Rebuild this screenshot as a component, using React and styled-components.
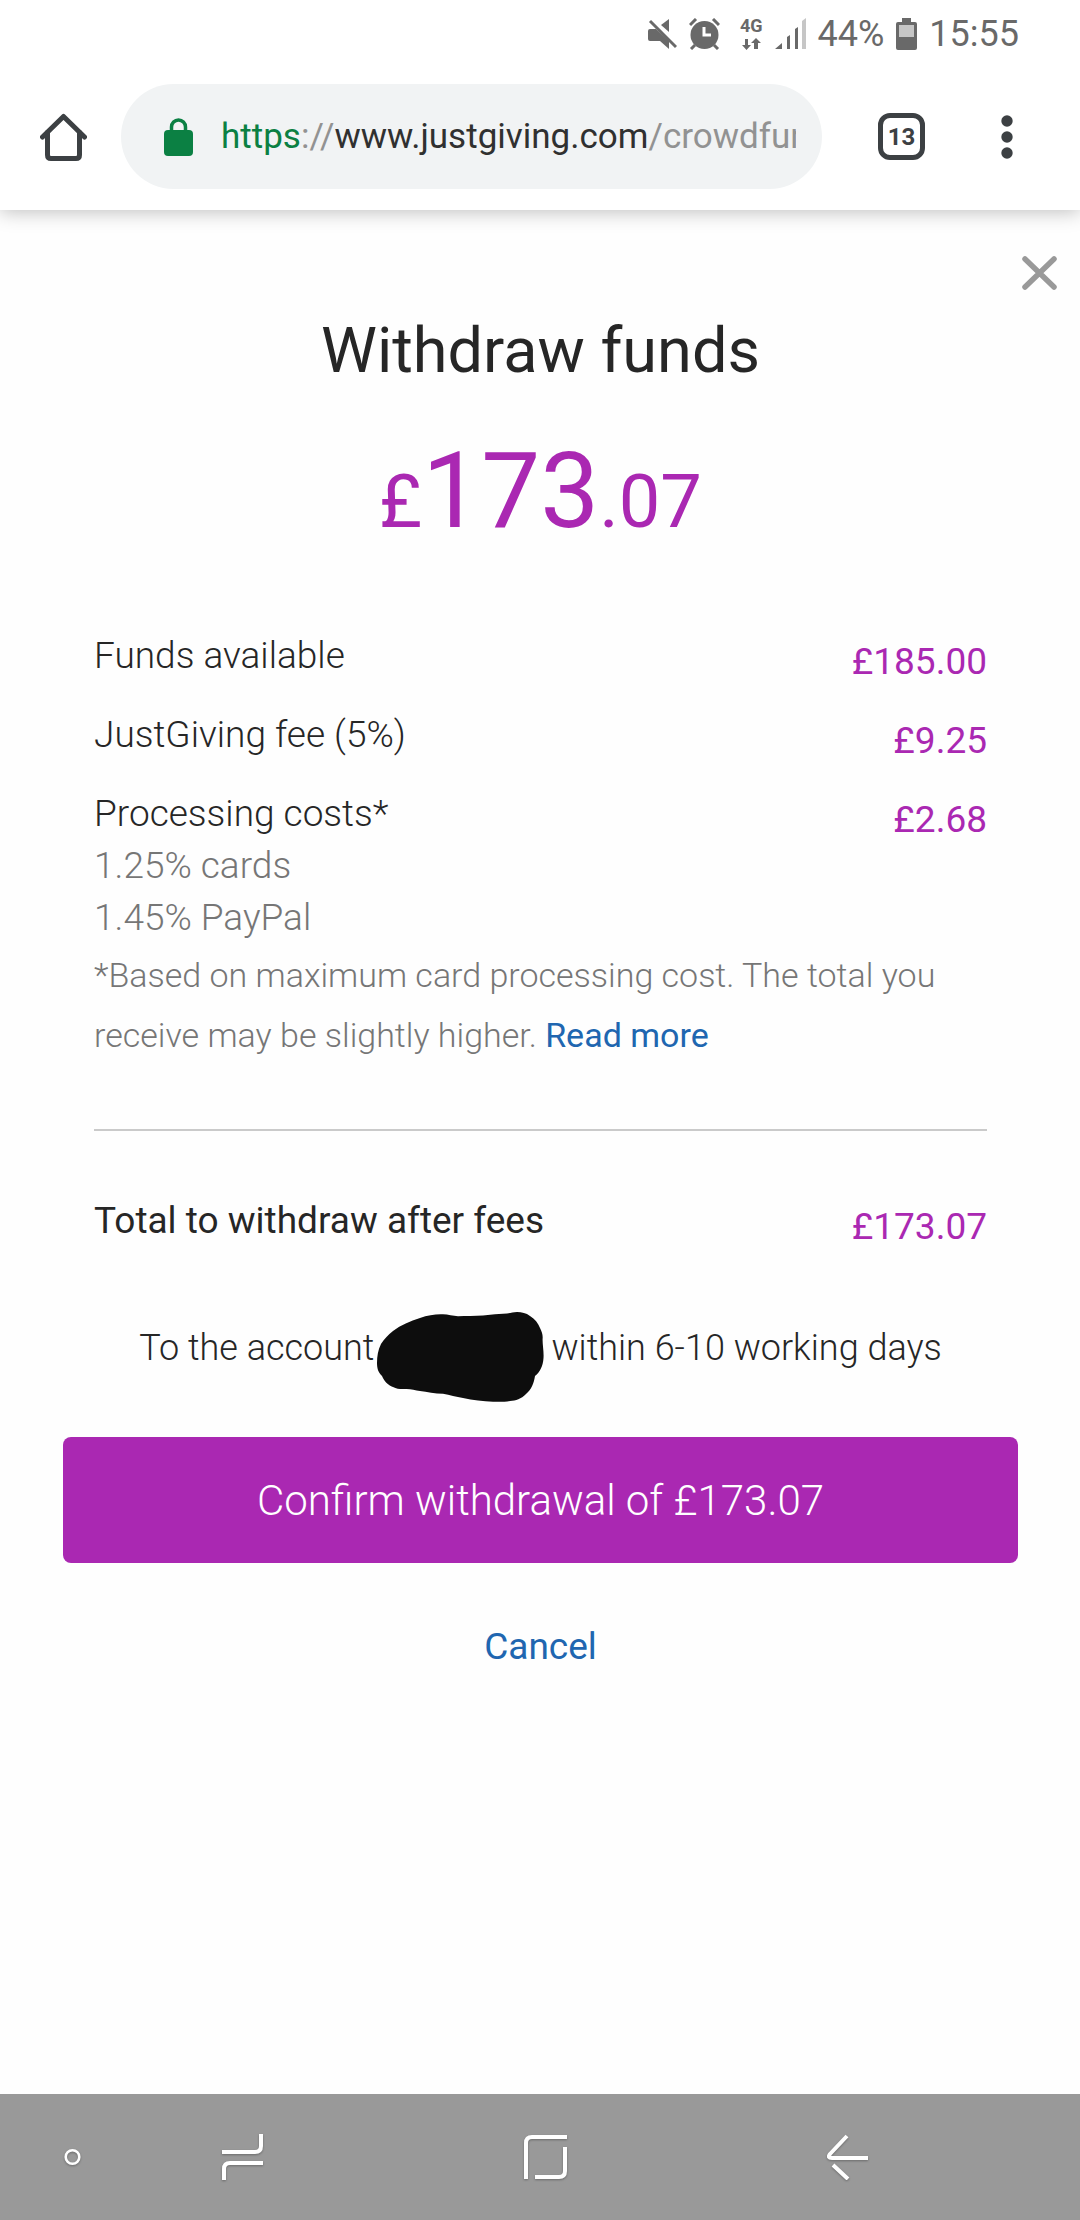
import React from "react";
import styled, { createGlobalStyle } from "styled-components";

const GlobalStyle = createGlobalStyle`
  *, *::before, *::after { box-sizing: border-box; }
  body {
    margin: 0;
    background: #fefefe;
    color: #262626;
    font-family: Roboto, "Liberation Sans", sans-serif;
  }
  button {
    margin: 0;
    padding: 0;
    border: 0;
    background: none;
    color: inherit;
    font: inherit;
    cursor: pointer;
  }
  svg { display: block; flex: none; }
`;

const Screen = styled.div`
  display: flex;
  flex-direction: column;
  min-height: 100vh;
`;

const StatusBar = styled.div`
  position: relative;
  z-index: 1;
  display: flex;
  align-items: center;
  justify-content: flex-end;
  gap: 12px;
  height: 63px;
  padding: 4px 61px 0 0;
  background: #fff;
  color: #696969;
  font-size: 36px;
  line-height: 42px;
`;

const Network = styled.div`
  display: flex;
  flex-direction: column;
  align-items: center;
  gap: 4px;
  margin-left: 8px;
  font-size: 18px;
  font-weight: 700;
  line-height: 16px;
`;

const Toolbar = styled.header`
  display: flex;
  align-items: center;
  height: 147px;
  padding: 0 67px 0 40px;
  background: #fff;
  color: #3c4043;
  box-shadow: 0 2px 18px rgba(0, 0, 0, 0.25);
`;

const Address = styled.button`
  display: flex;
  flex: 1;
  align-items: center;
  gap: 28px;
  min-width: 0;
  height: 105px;
  margin: 0 56px 0 34px;
  padding: 0 26px 0 43px;
  border-radius: 53px;
  background: #f1f3f4;
`;

const Url = styled.span`
  flex: 1;
  min-width: 0;
  overflow: hidden;
  color: #929292;
  font-size: 35px;
  line-height: 48px;
  text-align: left;
  white-space: nowrap;
`;

const Scheme = styled.span`
  color: #0b8043;
`;

const Host = styled.span`
  color: #303030;
`;

const TabCount = styled.button`
  width: 47px;
  height: 47px;
  margin-right: 76px;
  border: 5px solid #3c4043;
  border-radius: 12px;
  font-size: 24px;
  font-weight: 700;
  line-height: 36px;
`;

const Dialog = styled.main`
  display: flex;
  flex: 1;
  flex-direction: column;
  padding: 46px 62px 63px 63px;
`;

const CloseButton = styled.button`
  align-self: flex-end;
  margin-right: -39px;
`;

const Title = styled.h1`
  margin: 24px 0 42px;
  font-size: 63px;
  font-weight: 400;
  line-height: 74px;
  text-align: center;
`;

const Balance = styled.p`
  margin: 0 0 52px;
  color: #aa28b2;
  font-size: 74px;
  line-height: 124px;
  text-align: center;
`;

const Pounds = styled.span`
  font-size: 105px;
`;

const Breakdown = styled.section`
  padding: 0 31px;
`;

const Costs = styled.table`
  width: 100%;
  border-collapse: collapse;
  font-size: 37px;
`;

const CostLabel = styled.th`
  padding: 14px 0 13px;
  font-weight: ${(p) => (p.$strong ? 400 : 300)};
  line-height: 52px;
  text-align: left;
  vertical-align: top;
`;

const Rate = styled.div`
  color: #767676;
`;

const CostValue = styled.td`
  padding: 14px 0 0;
  color: #aa28b2;
  line-height: 64px;
  text-align: right;
  vertical-align: top;
`;

const Note = styled.p`
  margin: -12px 0 0;
  color: #767676;
  font-size: 34px;
  font-weight: 300;
  line-height: 60px;
`;

const TextLink = styled.a`
  color: #2066b0;
  font-weight: 400;
  text-decoration: none;
`;

const Divider = styled.hr`
  height: 2px;
  margin: 64px 0 50px;
  border: 0;
  background: #cacaca;
`;

const Destination = styled.p`
  display: flex;
  justify-content: center;
  margin: 62px 0 63px;
  font-size: 36px;
  font-weight: 300;
  line-height: 52px;

  svg { margin: -10px 7px -28px 3px; }
`;

const ConfirmButton = styled.button`
  height: 126px;
  border-radius: 8px;
  background: #aa28b2;
  color: #fff;
  font-size: 42px;
  font-weight: 300;
`;

const CancelButton = styled.button`
  align-self: center;
  margin-top: 58px;
  color: #2066b0;
  font-size: 37px;
  line-height: 52px;
`;

const SystemNav = styled.nav`
  display: flex;
  align-items: center;
  height: 126px;
  padding: 0 212px 0 64px;
  background: #999;
  color: #fff;

  svg { filter: drop-shadow(0 1px 1px rgba(0, 0, 0, 0.3)); }
`;

const NavKeys = styled.div`
  display: flex;
  flex: 1;
  justify-content: space-between;
  margin-left: 141px;
`;

const costs = [
  { label: "Funds available", value: "£185.00" },
  { label: "JustGiving fee (5%)", value: "£9.25" },
  {
    label: "Processing costs*",
    value: "£2.68",
    rates: ["1.25% cards", "1.45% PayPal"],
  },
];

const MutedIcon = () => (
  <svg width="29" height="30" viewBox="0 0 29 30" fill="currentColor">
    <path d="M21 0v13l-8-7z" />
    <path d="M0 12q0-2 2-2h6l13 12v8l-9-8H2q-2 0-2-2z" />
    <path d="M4 0l26 26" stroke="#fff" strokeWidth="2" />
    <path d="M2 2l26 26" stroke="currentColor" strokeWidth="3" />
  </svg>
);

const AlarmIcon = () => (
  <svg width="31" height="32" viewBox="0 0 31 32">
    <circle cx="15.500" cy="17" r="14" fill="currentColor" />
    <path
      d="M1 7l6-6M30 7l-6-6M6 27l-4 4M25 27l4 4"
      stroke="currentColor"
      strokeWidth="3"
    />
    <path d="M15 9v8h7" fill="none" stroke="#fff" strokeWidth="3" />
  </svg>
);

const DataArrows = () => (
  <svg width="19" height="12" viewBox="0 0 19 12" fill="currentColor">
    <path d="M3 1h3v6h3l-4.500 5L0 7h3zM12 11h4V5h3l-5-5-5 5h3z" />
  </svg>
);

const SignalIcon = () => (
  <svg width="31" height="32" viewBox="0 0 31 32" fill="currentColor">
    <path d="M0 31l7-6v6zM12 19l3-2v14h-3zM20 11l3-2v22h-3z" />
    <path d="M27 3l4-3v31h-4z" fill="#c6c6c6" />
  </svg>
);

const BatteryIcon = () => (
  <svg width="21" height="32" viewBox="0 0 21 32" fill="currentColor">
    <path d="M6 0h9v4h4q2 0 2 2v24q0 2-2 2H2q-2 0-2-2V6q0-2 2-2h4z" />
    <path d="M3 7h15v12H3z" fill="#c6c6c6" />
  </svg>
);

const HomeIcon = () => (
  <svg width="47" height="48" viewBox="0 0 47 48" fill="none" stroke="currentColor">
    <path
      d="M2.500 24L23.500 3.500 44.500 24M7.500 19V42q0 3.500 3.500 3.500H36q3.500 0 3.500-3.500V19"
      strokeWidth="5"
      strokeLinecap="round"
      strokeLinejoin="round"
    />
  </svg>
);

const LockIcon = () => (
  <svg width="29" height="38" viewBox="0 0 29 38">
    <rect y="12" width="29" height="26" rx="4" fill="#0b8043" />
    <path d="M7.500 14V9a7 7 0 0 1 14 0v5" fill="none" stroke="#0b8043" strokeWidth="3.500" />
  </svg>
);

const MenuIcon = () => (
  <svg width="12" height="44" viewBox="0 0 12 44" fill="currentColor">
    <circle cx="6" cy="6" r="5.700" />
    <circle cx="6" cy="22" r="5.700" />
    <circle cx="6" cy="38" r="5.700" />
  </svg>
);

const CloseIcon = () => (
  <svg width="35" height="34" viewBox="0 0 35 34">
    <path d="M3 3l29 28M32 3L3 31" stroke="#999" strokeWidth="5.500" strokeLinecap="round" />
  </svg>
);

const Redaction = () => (
  <svg width="167" height="90" viewBox="0 0 167 90">
    <path
      d="M0 51C0 44 1 38 4 32C7 27 11 23 16 19C24 13 33 9 43 6C51 3 59 2 66 2.300C71 2.500 76 4 81 4.300C89 4.200 98 4 106 3.600C114 2.500 122 2 130 1.500C134 1 136 0 140 0C145 0 149 1 153 4C158 7 161 11 163 16C165 20 166 23 165.600 27C165.400 32 167 40 166.500 46C166 54 163 60 158 64C157 71 154 78 149 82C144 87 139 88.500 133 89C127 90 122 90 116 89.700C106 89 96 88.500 86 86C79 85 73 83 66 81.800C58 81.500 50 80 43 79C38 78.500 33 76.500 28 77C24 77.300 20 77 16 75C11 73 7 69 5 64C1 60 0 56 0 51Z"
      fill="#0d0d0d"
    />
  </svg>
);

const DotIcon = () => (
  <svg width="17" height="18" viewBox="0 0 17 18">
    <circle cx="8.500" cy="9" r="6.800" fill="none" stroke="currentColor" strokeWidth="2.600" />
  </svg>
);

const RecentsIcon = () => (
  <svg width="41" height="48" viewBox="0 0 41 48" fill="none" stroke="currentColor" strokeWidth="4">
    <path d="M0 19h33q6 0 6-6V1M2 47V36q0-6 6-6h33" />
  </svg>
);

const HomeKeyIcon = () => (
  <svg width="43" height="44" viewBox="0 0 43 44" fill="none" stroke="currentColor" strokeWidth="4">
    <path d="M2 44V8q0-6 6-6h35M41 12v24q0 6-6 6H11" />
  </svg>
);

const BackIcon = () => (
  <svg width="41" height="46" viewBox="0 0 41 46" fill="none" stroke="currentColor" strokeWidth="4">
    <path d="M20 2L3 20q-3 4 2 4H41M6 31l15 14" strokeLinejoin="round" />
  </svg>
);

export default function App() {
  return (
    <Screen>
      <GlobalStyle />
      <StatusBar>
        <MutedIcon />
        <AlarmIcon />
        <Network>
          4G
          <DataArrows />
        </Network>
        <SignalIcon />
        <span>44%</span>
        <BatteryIcon />
        <time>15:55</time>
      </StatusBar>
      <Toolbar>
        <button type="button" aria-label="Home page">
          <HomeIcon />
        </button>
        <Address type="button">
          <LockIcon />
          <Url>
            <Scheme>https</Scheme>://<Host>www.justgiving.com</Host>/crowdfun
          </Url>
        </Address>
        <TabCount type="button">13</TabCount>
        <button type="button" aria-label="Menu">
          <MenuIcon />
        </button>
      </Toolbar>
      <Dialog>
        <CloseButton type="button" aria-label="Close">
          <CloseIcon />
        </CloseButton>
        <Title>Withdraw funds</Title>
        <Balance>
          £<Pounds>173</Pounds>.07
        </Balance>
        <Breakdown>
          <Costs>
            <tbody>
              {costs.map((cost) => (
                <tr key={cost.label}>
                  <CostLabel scope="row">
                    {cost.label}
                    {cost.rates?.map((rate) => (
                      <Rate key={rate}>{rate}</Rate>
                    ))}
                  </CostLabel>
                  <CostValue>{cost.value}</CostValue>
                </tr>
              ))}
            </tbody>
          </Costs>
          <Note>
            *Based on maximum card processing cost. The total you receive may be
            slightly higher. <TextLink href="#fees">Read more</TextLink>
          </Note>
          <Divider />
          <Costs>
            <tbody>
              <tr>
                <CostLabel scope="row" $strong>
                  Total to withdraw after fees
                </CostLabel>
                <CostValue>£173.07</CostValue>
              </tr>
            </tbody>
          </Costs>
        </Breakdown>
        <Destination>
          <span>To the account</span>
          <Redaction />
          <span>within 6-10 working days</span>
        </Destination>
        <ConfirmButton type="button">Confirm withdrawal of £173.07</ConfirmButton>
        <CancelButton type="button">Cancel</CancelButton>
      </Dialog>
      <SystemNav>
        <button type="button" aria-label="Hide navigation bar">
          <DotIcon />
        </button>
        <NavKeys>
          <button type="button" aria-label="Recent apps">
            <RecentsIcon />
          </button>
          <button type="button" aria-label="Home">
            <HomeKeyIcon />
          </button>
          <button type="button" aria-label="Back">
            <BackIcon />
          </button>
        </NavKeys>
      </SystemNav>
    </Screen>
  );
}
